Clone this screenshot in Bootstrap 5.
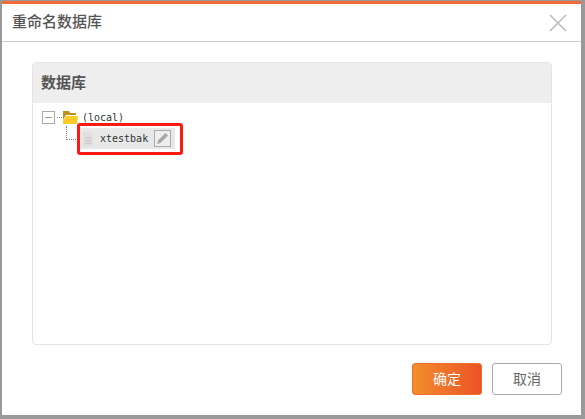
<!DOCTYPE html>
<html lang="zh-CN">
<head>
  <meta charset="UTF-8">
  <meta name="viewport" content="width=device-width, initial-scale=1.0">
  <title>重命名数据库</title>
  <link rel="stylesheet" href="https://cdn.jsdelivr.net/npm/bootstrap@5.3.0/dist/css/bootstrap.min.css">
  <style>
    html, body { height: 100%; }
    body { background: #999; font-family: "Liberation Sans", "Noto Sans CJK SC", sans-serif; overflow: hidden; }
    .dlg { width: 579px; height: 414px; margin: 1px 0 0 2px; background: #fff; border-top: 3px solid #f56a3c; }
    .dlg-head { height: 38px; border-bottom: 1px solid #ccc; padding-left: 10px; }
    .dlg-title { font-size: 15px; color: #555; font-weight: 500; }
    .dlg-close { width: 18px; height: 18px; margin-right: 14px; }
    .dlg-body { padding: 20px 29px 0 30px; }
    .db-panel { height: 283px; border: 1px solid #e4e4e4; border-radius: 4px; overflow: hidden; }
    .db-panel-head { height: 40px; background: #eee; padding-left: 8px; font-size: 15px; font-weight: 700; color: #555; }
    .tree-root { padding: 8px 0 0 9px; height: 21px; }
    .tree-toggle { width: 13px; height: 13px; border: 1px solid #aaa; position: relative; }
    .tree-toggle::after { content: ""; position: absolute; left: 2px; right: 2px; top: 5px; height: 1px; background: #999; }
    .tree-dots { width: 5px; border-top: 1px dotted #888; margin: 0 1px 0 2px; }
    .tree-label { font-family: "DejaVu Sans Mono", "Liberation Mono", monospace; font-size: 10px; color: #333; line-height: 14px; }
    .tree-child { padding-left: 33px; height: 36px; }
    .tree-elbow { width: 10px; height: 14px; margin-top: 2px; border-left: 1px dotted #888; border-bottom: 1px dotted #888; }
    .node-mark { width: 106px; height: 32px; margin: -1px 0 0 1px; border: 3px solid #fe1a12; border-radius: 3px; padding: 2px 5px 2px 0; }
    .node-inner { background: #e8e8e8; height: 21px; width: 100%; padding-left: 3px; }
    .node-text { margin-left: 7px; }
    .node-edit { width: 17px; height: 17px; border: 1px solid #aaa; background: #eee; margin-left: auto; margin-right: 4px; }
    .dlg-foot { padding-top: 18px; margin-right: -10px; gap: 10px; }
    .btn-sure, .btn-quit { width: 70px; height: 32px; padding: 0; font-size: 14px; border-radius: 3px; line-height: 30px; }
    .btn-sure { background: linear-gradient(90deg, #f28e2c, #ec5226); border: 1px solid #ee7030; color: #fff; }
    .btn-quit { background: #fff; border: 1px solid #aaa; color: #666; }
  </style>
</head>
<body>
  <div class="dlg">
    <div class="dlg-head d-flex align-items-center justify-content-between">
      <span class="dlg-title">重命名数据库</span>
      <svg class="dlg-close" viewBox="0 0 18 18"><path d="M1 1 L17 17 M17 1 L1 17" stroke="#bbb" stroke-width="1.6" fill="none"/></svg>
    </div>
    <div class="dlg-body">
      <div class="db-panel">
        <div class="db-panel-head d-flex align-items-center">数据库</div>
        <div class="tree-root d-flex align-items-center">
          <span class="tree-toggle"></span>
          <span class="tree-dots"></span>
          <svg width="15" height="13" viewBox="0 0 15 13" class="flex-shrink-0"><path d="M0 0 H6 L7 2 H13 V4 H3 L0 9 Z" fill="#bd8f1c"/><path d="M3 5 H15 L14 13 H0 V10 Z" fill="#fccb25"/></svg>
          <span class="tree-label ms-1">(local)</span>
        </div>
        <div class="tree-child d-flex align-items-start">
          <span class="tree-elbow"></span>
          <div class="node-mark">
            <div class="node-inner d-flex align-items-center">
              <svg width="10" height="14" viewBox="0 0 10 14" class="flex-shrink-0"><path d="M0 0 H7 L10 3 V14 H0 Z" fill="#e0e0e0"/><path d="M2 6 H8 M2 8.5 H8 M2 11 H8" stroke="#c4c4c4" stroke-width="1"/></svg>
              <span class="tree-label node-text">xtestbak</span>
              <span class="node-edit d-flex align-items-center justify-content-center">
                <svg width="13" height="13" viewBox="0 0 13 13"><path d="M9.5 1 L12 3.5 L4.5 11 L1 12 L2 8.5 Z" fill="#a8a8a8"/></svg>
              </span>
            </div>
          </div>
        </div>
      </div>
      <div class="dlg-foot d-flex justify-content-end">
        <button type="button" class="btn btn-sure">确定</button>
        <button type="button" class="btn btn-quit">取消</button>
      </div>
    </div>
  </div>
  <script src="https://cdn.jsdelivr.net/npm/bootstrap@5.3.0/dist/js/bootstrap.bundle.min.js"></script>
</body>
</html>
